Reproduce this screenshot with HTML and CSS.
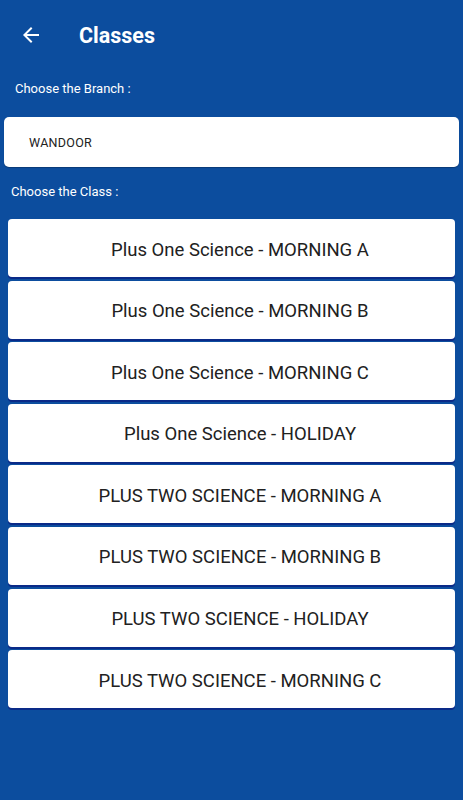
FILE: index.html
```html
<!DOCTYPE html>
<html lang="en">
<head>
  <meta charset="UTF-8">
  <meta name="viewport" content="width=device-width, initial-scale=1.0">
  <title>Classes</title>
  <link rel="stylesheet" href="styles.css">
</head>
<body>
  <div class="screen">
    <div class="toolbar">
      <svg class="back-icon" viewBox="0 0 24 24">
        <path d="M20 11H7.83l5.59-5.59L12 4l-8 8 8 8 1.41-1.41L7.83 13H20v-2z" fill="#fff"/>
      </svg>
      <h1>Classes</h1>
    </div>

    <p class="label branch-label">Choose the Branch :</p>
    <div class="branch-box">WANDOOR</div>

    <p class="label class-label">Choose the Class :</p>
    <div class="class-list">
      <div class="class-card">Plus One Science - MORNING A</div>
      <div class="class-card">Plus One Science - MORNING B</div>
      <div class="class-card">Plus One Science - MORNING C</div>
      <div class="class-card">Plus One Science - HOLIDAY</div>
      <div class="class-card">PLUS TWO SCIENCE - MORNING A</div>
      <div class="class-card">PLUS TWO SCIENCE - MORNING B</div>
      <div class="class-card">PLUS TWO SCIENCE - HOLIDAY</div>
      <div class="class-card">PLUS TWO SCIENCE - MORNING C</div>
    </div>
  </div>
</body>
</html>
```

FILE: styles.css
```css
body {
  margin: 0;
  font-family: Roboto, "Liberation Sans", Arial, sans-serif;
  background-color: #0c4d9e;
}

.screen {
  width: 463px;
  height: 800px;
  background-color: #0c4d9e;
}

.toolbar {
  display: flex;
  align-items: center;
  height: 70px;
  padding-left: 19px;
  box-sizing: border-box;
}

.back-icon {
  width: 24px;
  height: 24px;
}

.toolbar h1 {
  margin: 0 0 0 36px;
  color: #fff;
  font-size: 21.5px;
  font-weight: bold;
}

.label {
  margin: 0;
  color: #fff;
  font-size: 13px;
}

.branch-label {
  padding: 11px 0 0 15px;
  height: 36px;
}

.branch-box {
  margin: 0 4px;
  height: 50px;
  display: flex;
  align-items: center;
  padding-left: 25px;
  background-color: #fff;
  border-radius: 5px;
  box-shadow: 0 1px 1px rgba(0, 0, 0, 0.25);
  color: #222;
  font-size: 12.5px;
  letter-spacing: 0.3px;
}

.class-label {
  padding: 17px 0 0 11px;
  height: 35px;
}

.class-list {
  display: flex;
  flex-direction: column;
  gap: 3.6px;
  margin: 0 8px;
}

.class-card {
  height: 58px;
  box-sizing: border-box;
  padding: 3px 0 0 17px;
  display: flex;
  align-items: center;
  justify-content: center;
  background-color: #fff;
  border-radius: 4px;
  box-shadow: 0 2px 0 #0a2a88;
  color: #212121;
  font-size: 18.5px;
}
```
